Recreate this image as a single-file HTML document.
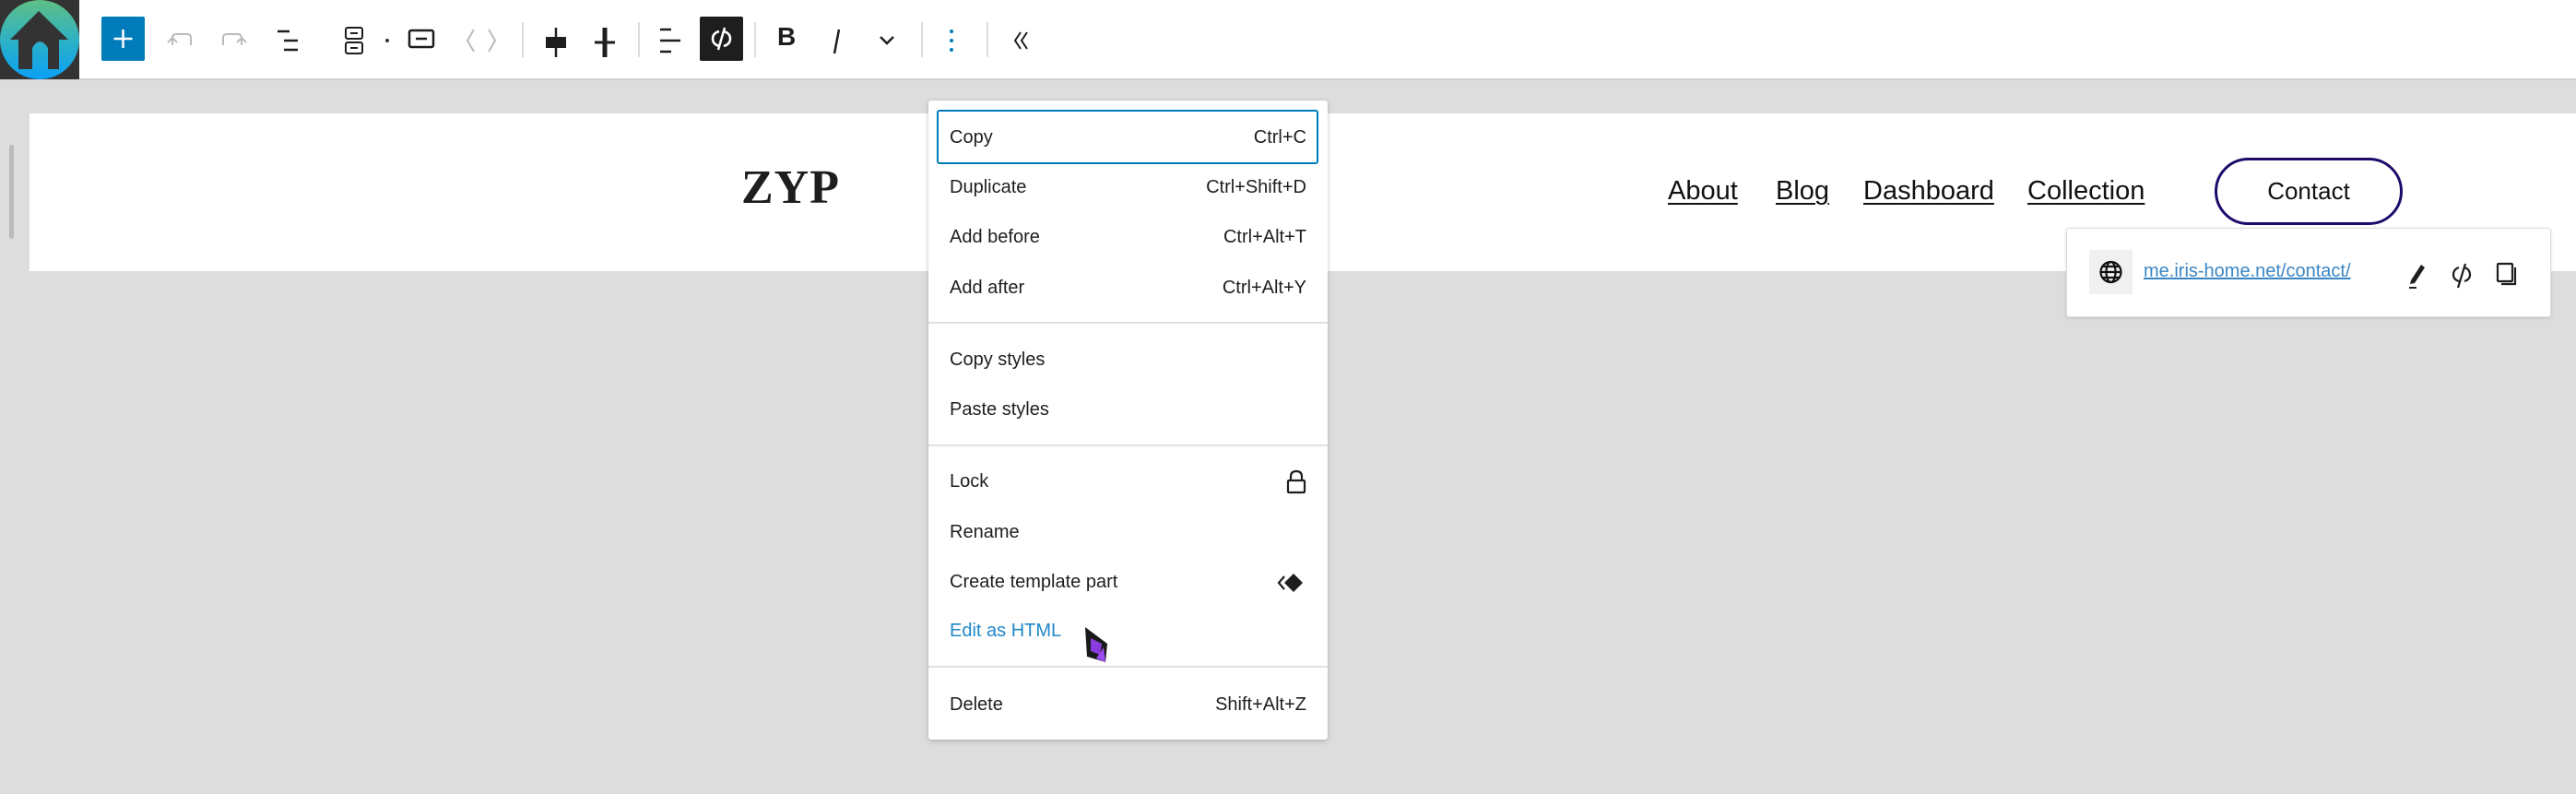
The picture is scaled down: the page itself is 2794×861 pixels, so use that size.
<!DOCTYPE html>
<html><head><meta charset="utf-8"><style>
*{margin:0;padding:0;box-sizing:border-box}
body{width:2794px;height:861px;overflow:hidden;background:#dddddd;font-family:"Liberation Sans",sans-serif;position:relative}
.a{position:absolute}
.tb{left:0;top:0;width:2794px;height:87px;background:#fff;border-bottom:2px solid #d0d0d0}
.sep{position:absolute;top:24px;width:2px;height:38px;background:#ddd}
.hdr{left:32px;top:123px;width:2762px;height:171px;background:#fff}
.nav{position:absolute;top:191px;font-size:29px;color:#111;text-decoration:underline;text-underline-offset:4px;text-decoration-thickness:2px}
.menu{left:1007px;top:109px;width:433px;height:693px;background:#fff;border-radius:3px;box-shadow:0 2px 6px rgba(0,0,0,.18),0 0 1px rgba(0,0,0,.2)}
.it{position:absolute;left:23px;right:23px;font-size:20px;color:#1e1e1e;height:30px;line-height:30px}
.it span{position:absolute;right:0;top:0}
.hr{position:absolute;left:0;right:0;height:2px;background:#e0e0e0}
</style></head><body>
<div class="a tb"></div>
<div class="a" style="left:0;top:0;width:86px;height:86px;background:#333">
<svg width="86" height="86" viewBox="0 0 86 86"><defs><linearGradient id="g" x1="0" y1="0" x2="0" y2="1"><stop offset="0" stop-color="#5fbf86"/><stop offset=".55" stop-color="#2ab0c8"/><stop offset="1" stop-color="#0aa0f5"/></linearGradient></defs><circle cx="43" cy="43" r="43" fill="url(#g)"/><path d="M11 43 L42 12 L74 43 L64 43 L64 75 L52 75 L52 52 Q43 38 35 52 L35 75 L20 75 L20 43 Z" fill="#333"/></svg></div>
<div class="a" style="left:110px;top:18px;width:47px;height:48px;background:#007cba;border-radius:2px"><svg width="47" height="48"><path d="M23.5 14v20M13.5 24h20" stroke="#fff" stroke-width="2.5"/></svg></div>
<svg class="a" style="left:175px;top:25px" width="40" height="40"><path d="M12 24 V16 q0-4 4-4 h12 q4 0 4 4 v8 M12 16 l-5 5 M12 16 l5 5" stroke="#bbb" stroke-width="2" fill="none"/></svg>
<svg class="a" style="left:234px;top:25px" width="40" height="40"><path d="M28 24 V16 q0-4-4-4 H12 q-4 0-4 4 v8 M28 16 l5 5 M28 16 l-5 5" stroke="#bbb" stroke-width="2" fill="none"/></svg>
<svg class="a" style="left:296px;top:25px" width="40" height="40"><path d="M5 9h13M12 19h15M12 29h15" stroke="#1e1e1e" stroke-width="2.5"/></svg>
<svg class="a" style="left:370px;top:25px" width="30" height="40"><rect x="5" y="5" width="18" height="12" rx="2" stroke="#1e1e1e" stroke-width="2" fill="none"/><rect x="5" y="21" width="18" height="12" rx="2" stroke="#1e1e1e" stroke-width="2" fill="none"/><path d="M10 11h8M10 27h8" stroke="#1e1e1e" stroke-width="2"/></svg>
<div class="a" style="left:418px;top:42px;width:4px;height:4px;background:#333;border-radius:50%"></div>
<svg class="a" style="left:440px;top:25px" width="35" height="40"><rect x="4" y="8" width="26" height="18" rx="2" stroke="#1e1e1e" stroke-width="2.5" fill="none"/><path d="M11 17h12" stroke="#1e1e1e" stroke-width="2.5"/></svg>
<svg class="a" style="left:500px;top:25px" width="45" height="40"><path d="M14 7 L7 19 L14 31 M30 7 L37 19 L30 31" stroke="#bbb" stroke-width="2" fill="none"/></svg>
<div class="sep" style="left:566px"></div>
<svg class="a" style="left:585px;top:25px" width="35" height="40"><path d="M18 5v32" stroke="#1e1e1e" stroke-width="2.5"/><rect x="7" y="15" width="22" height="12" fill="#1e1e1e"/></svg>
<svg class="a" style="left:640px;top:25px" width="35" height="40"><path d="M16 5v32" stroke="#1e1e1e" stroke-width="5"/><path d="M5 21h22" stroke="#1e1e1e" stroke-width="3"/></svg>
<div class="sep" style="left:692px"></div>
<svg class="a" style="left:710px;top:25px" width="35" height="40"><path d="M6 7h12M6 19h22M6 31h12" stroke="#1e1e1e" stroke-width="2.5"/></svg>
<div class="a" style="left:759px;top:18px;width:47px;height:48px;background:#1e1e1e;border-radius:2px"><svg width="47" height="48"><path d="M21 16 q-7 2-7 8 q0 6 7 8 M26 16 q7 2 7 8 q0 6-7 8 M27 12 L20 36" stroke="#fff" stroke-width="2.5" fill="none"/></svg></div>
<div class="sep" style="left:818px"></div>
<div class="a" style="left:843px;top:24px;font-size:28px;font-weight:bold;color:#1e1e1e">B</div>
<svg class="a" style="left:897px;top:28px" width="20" height="34"><path d="M13 4 L8 30" stroke="#1e1e1e" stroke-width="2.5"/></svg>
<svg class="a" style="left:950px;top:34px" width="25" height="20"><path d="M5 6 L12 13 L19 6" stroke="#1e1e1e" stroke-width="2.5" fill="none"/></svg>
<div class="sep" style="left:999px"></div>
<svg class="a" style="left:1025px;top:25px" width="15" height="40"><circle cx="7" cy="9" r="2" fill="#007cba"/><circle cx="7" cy="19" r="2" fill="#007cba"/><circle cx="7" cy="29" r="2" fill="#007cba"/></svg>
<div class="sep" style="left:1070px"></div>
<svg class="a" style="left:1095px;top:25px" width="30" height="40"><path d="M12 10 L6 19 L12 28 M19 10 L13 19 L19 28" stroke="#1e1e1e" stroke-width="2" fill="none"/></svg>
<div class="a" style="left:10px;top:157px;width:5px;height:102px;background:#bbb;border-radius:3px"></div>
<div class="a hdr"></div>
<div class="a" style="left:804px;top:174px;font-family:'Liberation Serif',serif;font-weight:bold;font-size:52px;color:#1e1e1e;letter-spacing:1px">ZYP</div>
<div class="nav" style="left:1809px">About</div>
<div class="nav" style="left:1926px">Blog</div>
<div class="nav" style="left:2021px">Dashboard</div>
<div class="nav" style="left:2199px">Collection</div>
<div class="a" style="left:2402px;top:171px;width:204px;height:73px;border:3px solid #1f0a6b;border-radius:37px;font-size:26px;color:#111;text-align:center;line-height:67px">Contact</div>
<div class="a" style="left:2241px;top:247px;width:526px;height:97px;background:#fff;border:1px solid #ddd;border-radius:3px;box-shadow:0 1px 4px rgba(0,0,0,.12)"></div>
<div class="a" style="left:2266px;top:271px;width:47px;height:48px;background:#f0f0f0;border-radius:2px"><svg width="47" height="48"><g stroke="#111" stroke-width="2.2" fill="none"><circle cx="23.5" cy="24" r="11"/><ellipse cx="23.5" cy="24" rx="5" ry="11"/><path d="M12.5 24h22M14 18h19M14 30h19"/></g></svg></div>
<div class="a" style="left:2325px;top:283px;font-size:20px;color:#3a86c4;text-decoration:underline">me.iris-home.net/contact/</div>
<svg class="a" style="left:2607px;top:280px" width="30" height="36"><path d="M8 24 L19 7 L23 10 L12 27 L7 28 Z" fill="#1e1e1e"/><path d="M6 32h8" stroke="#1e1e1e" stroke-width="2"/></svg>
<svg class="a" style="left:2655px;top:280px" width="30" height="36"><path d="M12 10 q-6 2-6 8 q0 5 6 7 M18 10 q6 2 6 8 q0 5-6 7 M19 6 L11 32" stroke="#1e1e1e" stroke-width="2.2" fill="none"/></svg>
<svg class="a" style="left:2704px;top:280px" width="30" height="36"><rect x="5" y="6" width="16" height="19" rx="1" stroke="#1e1e1e" stroke-width="2.2" fill="none"/><path d="M24 10 V28 H9" stroke="#1e1e1e" stroke-width="2.2" fill="none"/></svg>
<div class="a menu">
<div class="a" style="left:9px;top:10px;width:414px;height:59px;border:2.5px solid #007cba;border-radius:3px"></div>
<div class="it" style="top:25px">Copy<span>Ctrl+C</span></div>
<div class="it" style="top:79px">Duplicate<span>Ctrl+Shift+D</span></div>
<div class="it" style="top:133px">Add before<span>Ctrl+Alt+T</span></div>
<div class="it" style="top:188px">Add after<span>Ctrl+Alt+Y</span></div>
<div class="hr" style="top:240px"></div>
<div class="it" style="top:266px">Copy styles</div>
<div class="it" style="top:320px">Paste styles</div>
<div class="hr" style="top:373px"></div>
<div class="it" style="top:398px">Lock<span><svg width="22" height="28" style="margin-top:2px"><path d="M5 12 V8 q0-6 6-6 q6 0 6 6 V12" stroke="#1e1e1e" stroke-width="2.2" fill="none"/><rect x="2" y="12" width="18" height="13" rx="1" stroke="#1e1e1e" stroke-width="2.2" fill="none"/></svg></span></div>
<div class="it" style="top:453px">Rename</div>
<div class="it" style="top:507px">Create template part<span><svg width="32" height="30" style="margin-top:1px"><path d="M8 8 L2 15 L8 22" stroke="#1e1e1e" stroke-width="2.2" fill="none"/><path d="M18 5 L28 15 L18 25 L8 15 Z" fill="#1e1e1e"/></svg></span></div>
<div class="it" style="top:560px;color:#1e88c7">Edit as HTML</div>
<div class="hr" style="top:613px"></div>
<div class="it" style="top:640px">Delete<span>Shift+Alt+Z</span></div>
</div>
<svg class="a" style="left:1175px;top:678px" width="32" height="44"><path d="M2 2 L26 20 L24 40 L4 34 Z" fill="#1a1a1a"/><path d="M8 14 L20 20 L18 32 L8 28 Z" fill="#8a3be0"/><path d="M22 24 L24 40 L14 36" fill="#9b4cf0"/></svg>
</body></html>
